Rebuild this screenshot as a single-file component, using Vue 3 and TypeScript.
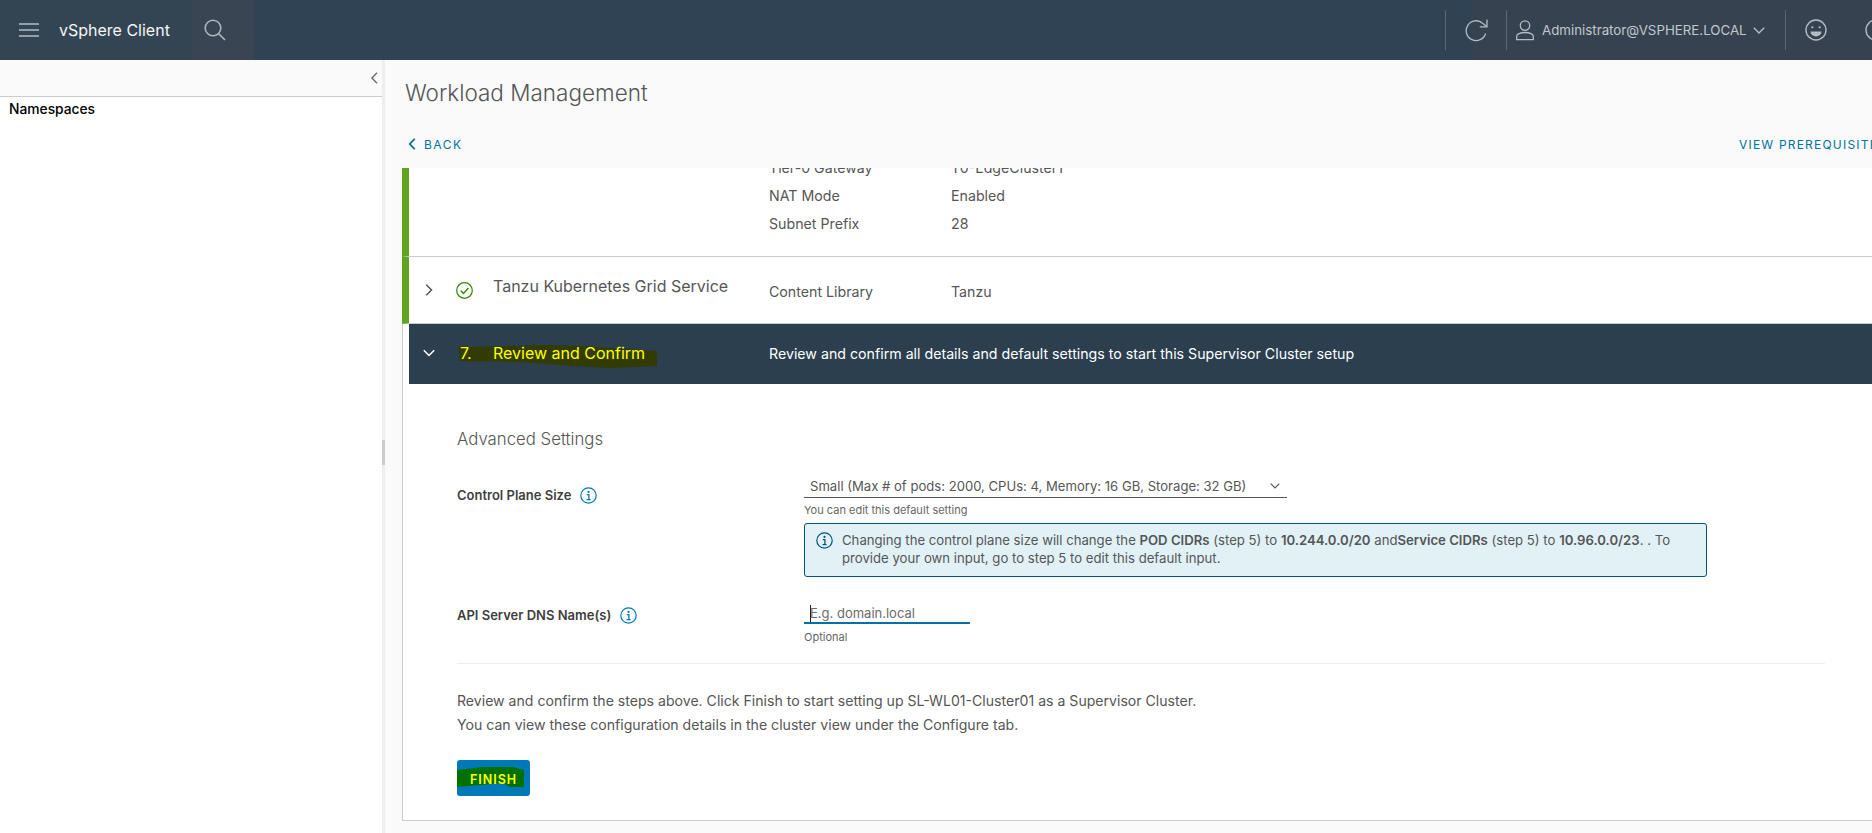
<template>
  <div class="app">
    <header class="topbar">
      <div class="brand">
        <svg class="burger" width="20" height="14" viewBox="0 0 20 14">
          <path d="M0 1h20M0 7h20M0 13h20" stroke="#b4bcc3" stroke-width="1.4" />
        </svg>
        <span class="product">vSphere Client</span>
      </div>
      <div class="search">
        <svg width="22" height="22" viewBox="0 0 22 22" fill="none" stroke="#adb5bb" stroke-width="1.6">
          <circle cx="9" cy="9" r="7.8" />
          <path d="M14.6 14.6 21 21" />
        </svg>
      </div>
      <div class="spacer">
        <span class="vsep"></span>
        <svg class="refresh" width="23" height="23" viewBox="0 0 23 23" fill="none" stroke="#b4bcc3" stroke-width="1.3">
          <path d="M20.6 14.5A9.9 9.9 0 1 1 17.6 4.2L21.6 7.4" />
          <path d="M22 .6v7.2h-7.2" />
        </svg>
      </div>
      <div class="actions">
        <span class="vsep"></span>
        <button class="user">
          <svg width="18" height="21" viewBox="0 0 18 21" fill="none" stroke="#b4bcc3" stroke-width="1.3">
            <circle cx="9" cy="5.6" r="4.7" />
            <path d="M.7 19.6v-3.2c0-1.2.7-2 1.8-2.5 2-1 4.2-1.4 6.5-1.4s4.500.4 6.500 1.400c1.100.5 1.800 1.300 1.800 2.500v3.200z" />
          </svg>
          <span class="user-name">Administrator@VSPHERE.LOCAL</span>
          <svg class="user-caret" width="12" height="7" viewBox="0 0 12 7" fill="none" stroke="#b4bcc3" stroke-width="1.4">
            <path d="M.8.8 6 6l5.200-5.200" />
          </svg>
        </button>
        <span class="vsep last"></span>
        <svg class="smile" width="22" height="22" viewBox="0 0 22 22" fill="none" stroke="#b4bcc3" stroke-width="1.4">
          <circle cx="11" cy="11" r="10" />
          <circle cx="7.300" cy="8.300" r="1.100" fill="#b4bcc3" stroke="none" />
          <circle cx="14.700" cy="8.300" r="1.100" fill="#b4bcc3" stroke="none" />
          <path d="M5.500 12.500h11a5.500 5 0 0 1-11 0z" fill="#b4bcc3" stroke="none" />
        </svg>
        <svg class="help" width="22" height="22" viewBox="0 0 22 22" fill="none" stroke="#b4bcc3" stroke-width="1.4">
          <circle cx="11" cy="11" r="10" />
        </svg>
      </div>
    </header>

    <div class="page">
      <aside class="sidebar">
        <div class="side-head">
          <svg width="7" height="12" viewBox="0 0 7 12" fill="none" stroke="#666" stroke-width="1.300">
            <path d="M6 .8.9 6 6 11.200" />
          </svg>
        </div>
        <div class="side-item">Namespaces</div>
      </aside>
      <div class="sash"><span></span></div>

      <main class="main">
        <div class="main-head">
          <h1>Workload Management</h1>
          <div class="links">
            <a class="link back">
              <svg width="8" height="12" viewBox="0 0 8 12" fill="none" stroke="#0072a3" stroke-width="1.700">
                <path d="M6.800.9 1.700 6l5.100 5.100" />
              </svg>
              BACK
            </a>
            <a class="link prereq">VIEW PREREQUISITES</a>
          </div>
        </div>

        <div class="card">
          <section class="step done clipped">
            <div class="step-details">
              <div v-for="d in networkDetails" :key="d.label" class="kv">
                <span>{{ d.label }}</span>
                <span>{{ d.value }}</span>
              </div>
            </div>
          </section>

          <section class="step done service">
            <div class="step-row">
              <svg class="chev" width="8" height="12" viewBox="0 0 8 12" fill="none" stroke="#565656" stroke-width="1.500">
                <path d="M1.200.8 6.500 6l-5.300 5.200" />
              </svg>
              <svg class="check" width="17" height="17" viewBox="0 0 17 17" fill="none" stroke="#318700" stroke-width="1.200">
                <circle cx="8.500" cy="8.500" r="7.800" />
                <path d="m4.800 8.700 2.700 2.700 4.900-5.400" stroke-width="1.400" />
              </svg>
              <span class="step-title">Tanzu Kubernetes Grid Service</span>
              <div class="kv">
                <span>Content Library</span>
                <span>Tanzu</span>
              </div>
            </div>
          </section>

          <section class="step-active">
            <svg class="marker" width="198" height="24" viewBox="0 0 198 24">
              <polygon points="0,3 91,1 141,3 198,7 198,22 151,24 116,22 61,18 0,17" fill="#323c00" />
            </svg>
            <svg class="chev" width="12" height="8" viewBox="0 0 12 8" fill="none" stroke="#fff" stroke-width="1.500">
              <path d="M.8 1.200 6 6.500l5.200-5.300" />
            </svg>
            <span class="step-num">7.</span>
            <span class="step-title">Review and Confirm</span>
            <span class="step-desc">Review and confirm all details and default settings to start this Supervisor Cluster setup</span>
          </section>

          <section class="body">
            <h2>Advanced Settings</h2>

            <div class="field first">
              <label>
                Control Plane Size
                <svg class="info" viewBox="0 0 17 17" fill="none" stroke="currentColor">
                  <circle cx="8.500" cy="8.500" r="7.700" stroke-width="1.200" />
                  <circle cx="8.500" cy="4.900" r="1.100" fill="currentColor" stroke="none" />
                  <path d="M6.800 7.600h2.100v5M6.600 12.700h4" stroke-width="1.300" />
                </svg>
              </label>
              <div class="control">
                <div class="select">
                  <span>{{ controlPlaneSize }}</span>
                  <svg width="10" height="6" viewBox="0 0 10 6" fill="none" stroke="#565656" stroke-width="1.200">
                    <path d="M.7.700 5 5l4.300-4.300" />
                  </svg>
                </div>
                <div class="help-text">You can edit this default setting</div>
                <div class="alert">
                  <svg class="info alert-icon" viewBox="0 0 17 17" fill="none" stroke="currentColor">
                    <circle cx="8.500" cy="8.500" r="7.700" stroke-width="1.200" />
                    <circle cx="8.500" cy="4.900" r="1.100" fill="currentColor" stroke="none" />
                    <path d="M6.800 7.600h2.100v5M6.600 12.700h4" stroke-width="1.300" />
                  </svg>
                  <p>
                    Changing the control plane size will change the <b>POD CIDRs</b> (step 5) to <b>10.244.0.0/20</b> and<b>Service CIDRs</b> (step 5) to <b>10.96.0.0/23</b>. . To<br />
                    provide your own input, go to step 5 to edit this default input.
                  </p>
                </div>
              </div>
            </div>

            <div class="field second">
              <label>
                API Server DNS Name(s)
                <svg class="info" viewBox="0 0 17 17" fill="none" stroke="currentColor">
                  <circle cx="8.500" cy="8.500" r="7.700" stroke-width="1.200" />
                  <circle cx="8.500" cy="4.900" r="1.100" fill="currentColor" stroke="none" />
                  <path d="M6.800 7.600h2.100v5M6.600 12.700h4" stroke-width="1.300" />
                </svg>
              </label>
              <div class="control">
                <div class="input"><i class="caret"></i>E.g. domain.local</div>
                <div class="help-text">Optional</div>
              </div>
            </div>

            <hr />

            <p class="note">Review and confirm the steps above. Click Finish to start setting up SL-WL01-Cluster01 as a Supervisor Cluster.</p>
            <p class="note">You can view these configuration details in the cluster view under the Configure tab.</p>

            <button class="finish">
              <svg class="marker" width="68" height="28" viewBox="0 0 68 28">
                <polygon points="0,10 26,7 56,7 67,10 67,27 53,27 46,23 0,27" fill="#007000" />
              </svg>
              <span>FINISH</span>
            </button>
          </section>
        </div>
      </main>
    </div>
  </div>
</template>

<script setup lang="ts">
interface Detail {
  label: string
  value: string
}

const networkDetails: Detail[] = [
  { label: 'Tier-0 Gateway', value: 'T0-EdgeCluster1' },
  { label: 'NAT Mode', value: 'Enabled' },
  { label: 'Subnet Prefix', value: '28' },
]

const controlPlaneSize = 'Small (Max # of pods: 2000, CPUs: 4, Memory: 16 GB, Storage: 32 GB)'
</script>

<style>
html, body { margin: 0; height: 100%; overflow: hidden; }
</style>

<style scoped>
.app {
  display: flex;
  flex-direction: column;
  width: 1872px;
  height: 833px;
  overflow: hidden;
  font-family: Inter, "Open Sans", sans-serif;
  color: #565656;
  background: #fafafa;
}

/* top bar */
.topbar {
  display: flex;
  flex: none;
  height: 60px;
  color: #fff;
  background: #304352;
}
.brand {
  display: flex;
  align-items: center;
  width: 192px;
  padding-left: 19px;
  box-sizing: border-box;
  background: #334553;
}
.burger { margin-right: 20px; }
.product { font-size: 16px; color: #f4f6f7; }
.search {
  display: flex;
  align-items: center;
  width: 62px;
  padding-left: 12px;
  box-sizing: border-box;
  background: #394553;
}
.spacer {
  display: flex;
  flex: 1;
  align-items: center;
  justify-content: flex-end;
  background: #2f4354;
}
.vsep {
  flex: none;
  width: 1px;
  height: 40px;
  background: #5b6874;
}
.refresh {
  position: relative;
  z-index: 1;
  flex: none;
  margin: 0 -16px 0 19px;
}
.actions {
  display: flex;
  flex: none;
  align-items: center;
  width: 400px;
  box-sizing: border-box;
  padding-left: 34px;
  overflow: hidden;
  background: #36424f;
}
.user {
  display: flex;
  flex: none;
  align-items: center;
  gap: 8px;
  width: 278px;
  padding: 0 0 0 9px;
  border: 0;
  background: none;
  font: inherit;
}
.user-name {
  font-size: 13.3px;
  color: #c0c7cd;
  white-space: nowrap;
}
.user-caret { margin-left: -2px; }
.smile { margin-left: 19px; flex: none; }
.help { margin-left: 38px; flex: none; }

/* page split */
.page {
  display: flex;
  flex: 1;
  min-height: 0;
}
.sidebar {
  flex: none;
  width: 382px;
  background: #fff;
}
.side-head {
  display: flex;
  align-items: center;
  justify-content: flex-end;
  height: 36px;
  padding-right: 4px;
  border-bottom: 1px solid #ccc;
  background: #fafafa;
}
.side-item {
  padding: 3px 9px;
  font-size: 13.8px;
  line-height: 18px;
  font-weight: 500;
  color: #000;
}
.sash {
  flex: none;
  width: 3px;
  background: #eee;
}
.sash span {
  display: block;
  width: 3px;
  height: 25px;
  margin-top: 380px;
  background: #ccc;
}

/* main column */
.main {
  display: flex;
  flex: 1;
  flex-direction: column;
  min-width: 0;
  overflow: hidden;
  padding-left: 17px;
}
.main-head {
  flex: none;
  height: 108px;
  padding-left: 3px;
  box-sizing: border-box;
}
h1 {
  margin: 0;
  padding-top: 17px;
  font-size: 22.5px;
  line-height: 32px;
  font-weight: 300;
  color: #565656;
}
.links {
  display: flex;
  justify-content: space-between;
  margin-top: 25px;
  height: 20px;
  align-items: center;
}
.link {
  display: flex;
  align-items: center;
  gap: 8px;
  font-size: 12px;
  letter-spacing: 1.500px;
  color: #0072a3;
  white-space: nowrap;
}
.back { padding-left: 3px; }
.prereq { width: 133px; letter-spacing: 1.200px; }

.card {
  flex: 1;
  margin-right: -2px;
  border-left: 1px solid #ccc;
  border-bottom: 1px solid #ccc;
  margin-bottom: 12px;
  background: #fff;
}

/* steps */
.step {
  border-left: 7px solid #62a420;
  border-bottom: 1px solid #ccc;
}
.step.done { margin-left: -1px; }
.clipped {
  display: flex;
  flex-direction: column;
  justify-content: flex-end;
  height: 89px;
  overflow: hidden;
  box-sizing: border-box;
}
.step-details {
  flex: none;
  padding: 0 0 19px 360px;
}
.kv {
  display: flex;
  height: 28px;
  align-items: center;
  font-size: 14.200px;
  color: #565656;
}
.kv span:first-child { width: 182px; }
.step-row {
  display: grid;
  grid-template-columns: 40px 44px 276px 1fr;
  height: 66px;
  align-items: center;
}
.chev { justify-self: center; }
.check { margin-left: 7px; }
.step-title {
  font-size: 16px;
  margin-top: -8px;
  white-space: nowrap;
}
.step-row .kv { margin-top: 2px; }

.step-active {
  position: relative;
  display: grid;
  grid-template-columns: 40px 44px 276px 1fr;
  align-items: center;
  height: 60px;
  box-sizing: border-box;
  padding-bottom: 2px;
  margin-left: 6px;
  background: #2b3f4f;
  color: #fff;
}
.step-active .chev { position: relative; }
.step-num {
  position: relative;
  padding-left: 11px;
  font-size: 16px;
  color: #ff0;
}
.step-active .step-title {
  position: relative;
  margin-top: 0;
  color: #ff0;
}
.step-desc {
  position: relative;
  font-size: 14.200px;
  white-space: nowrap;
}
.marker {
  position: absolute;
  left: 50px;
  top: 20px;
}

/* advanced settings */
.body { padding: 44px 49px 0 54px; }
h2 {
  margin: 0;
  font-size: 16.800px;
  line-height: 22px;
  font-weight: 300;
  color: #565656;
}
.field {
  display: grid;
  grid-template-columns: 347px 1fr;
}
.field.first { margin-top: 25px; }
.field.second { margin-top: 25px; }
label {
  display: flex;
  align-items: center;
  gap: 9px;
  height: 18px;
  font-size: 13px;
  font-weight: 600;
  color: #3f3f3f;
}
.first label { padding-top: 11px; }
.second label { padding-top: 4px; }
.info {
  width: 17px;
  height: 17px;
  flex: none;
  color: #0079b8;
}
.select {
  display: flex;
  align-items: center;
  justify-content: space-between;
  width: 483px;
  height: 23px;
  padding: 0 7px 0 6px;
  box-sizing: border-box;
  border-bottom: 1px solid #565656;
  font-size: 13.100px;
  white-space: nowrap;
}
.help-text {
  margin-top: 5px;
  font-size: 11px;
  line-height: 14px;
  color: #666;
}
.alert {
  display: flex;
  align-items: flex-start;
  gap: 9px;
  width: 903px;
  height: 54px;
  margin-top: 6px;
  padding: 7px 0 0 11px;
  box-sizing: border-box;
  border: 1px solid #00567a;
  border-radius: 3px;
  background: #e1f1f6;
}
.alert-icon { color: #00567a; margin-top: 1px; }
.alert p {
  margin: 0;
  font-size: 13.160px;
  line-height: 18px;
  white-space: nowrap;
}
.alert b { font-weight: 600; }
.input {
  position: relative;
  width: 166px;
  height: 22px;
  padding-left: 6px;
  box-sizing: border-box;
  border-bottom: 2px solid #0072a3;
  font-size: 13px;
  line-height: 22px;
  color: #6b6b6b;
}
.caret {
  position: absolute;
  left: 6px;
  top: 3px;
  width: 1px;
  height: 17px;
  background: #222;
}
.second .help-text { margin-top: 6px; }
hr {
  height: 1px;
  margin: 19px 0 25px;
  border: 0;
  background: #eee;
}
.note {
  margin: 0;
  font-size: 14.100px;
  line-height: 24px;
  color: #565656;
}
.finish {
  position: relative;
  display: block;
  width: 73px;
  height: 36px;
  margin-top: 23px;
  padding: 0;
  border: 0;
  border-radius: 3px;
  background: #0079b8;
  font: inherit;
  font-size: 12.500px;
  font-weight: 600;
  letter-spacing: 1px;
  color: #ff0;
}
.finish .marker { left: 0; top: 0; }
.finish span { position: relative; top: 1px; }
</style>
